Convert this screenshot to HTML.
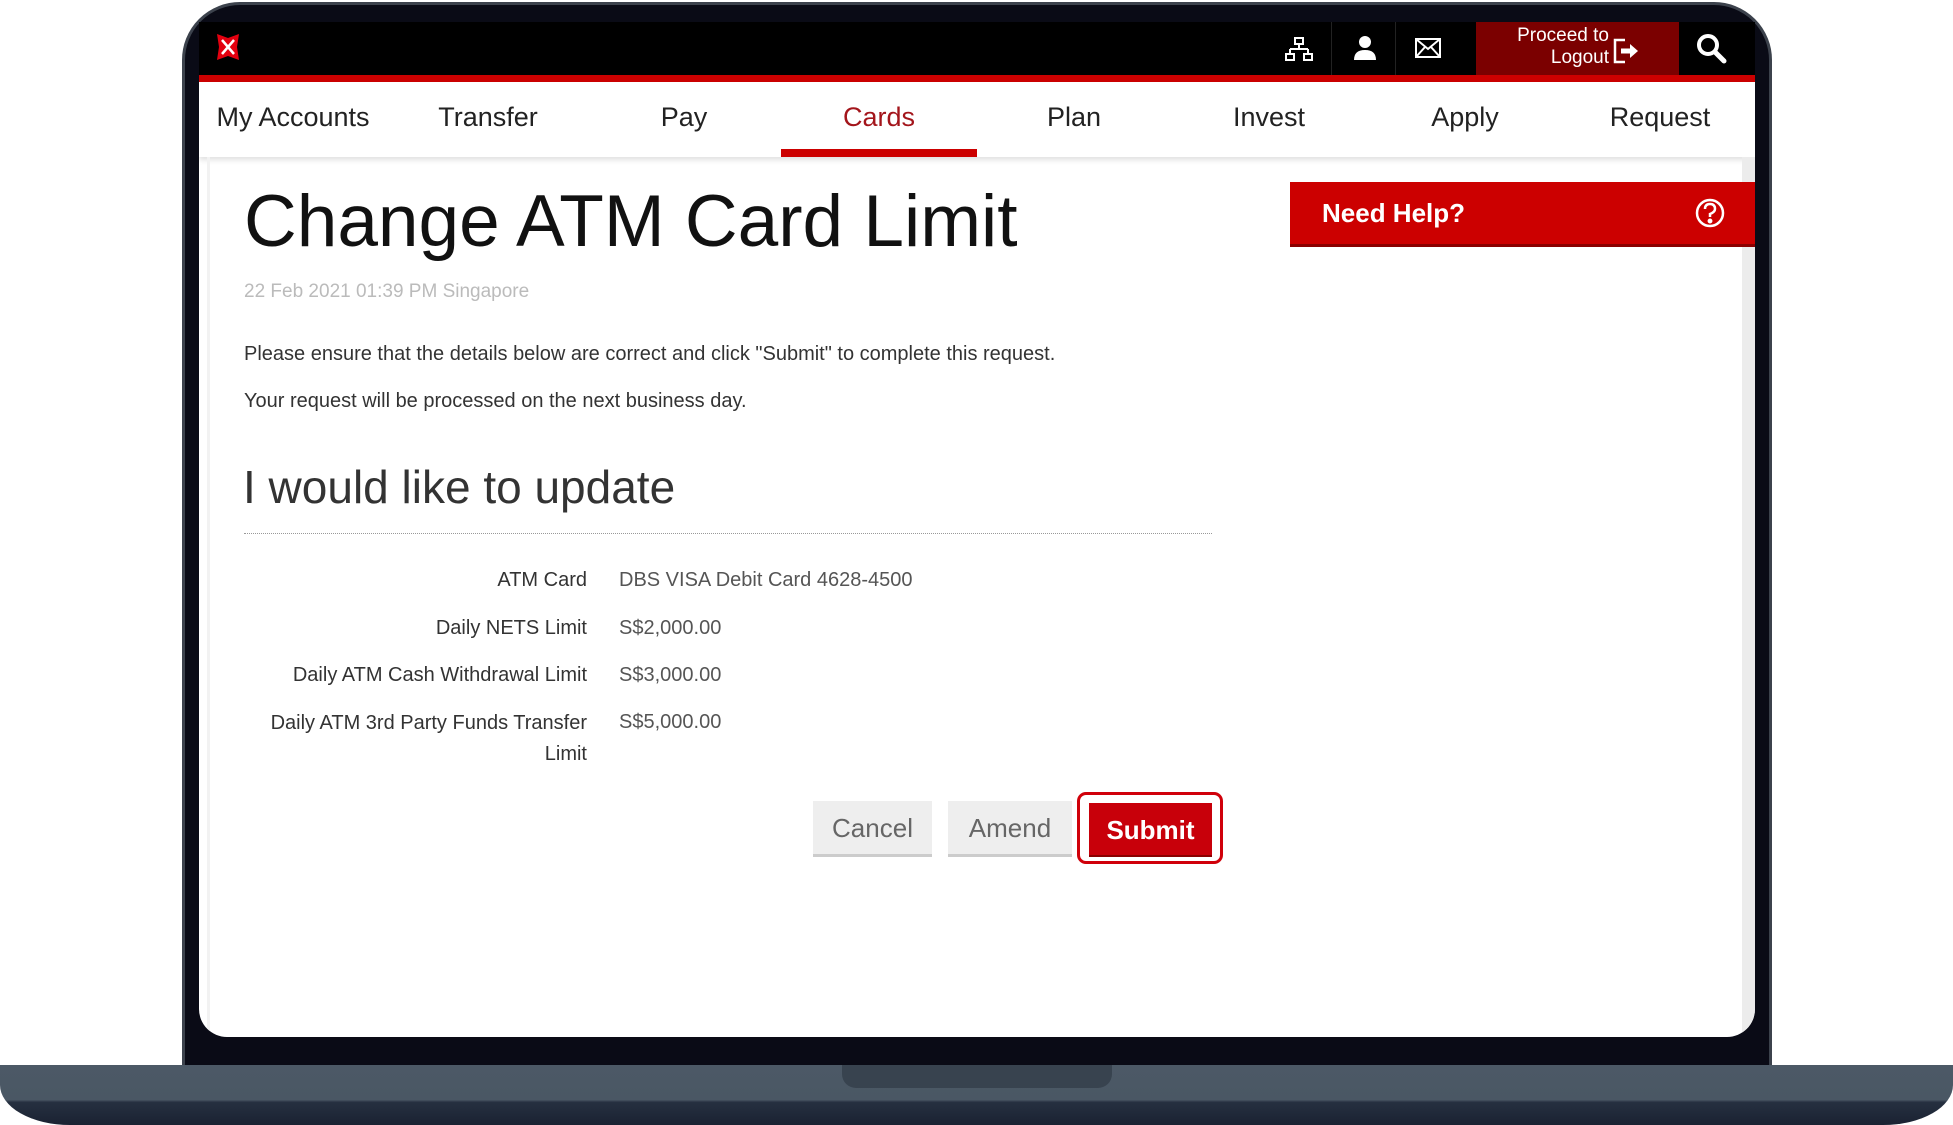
<!DOCTYPE html>
<html><head><meta charset="utf-8"><style>
*{margin:0;padding:0;box-sizing:border-box}
body{width:1953px;height:1125px;background:#fff;position:relative;overflow:hidden;font-family:"Liberation Sans",sans-serif}
.abs{position:absolute}
#body{left:182px;top:2px;width:1590px;height:1080px;background:#0a0b16;border-radius:58px 58px 0 0;border:3px solid #3c424c}
#screen{left:199px;top:22px;width:1556px;height:1015px;background:#fff;border-radius:0 0 28px 28px;overflow:hidden}
#top{left:0;top:0;width:1556px;height:53px;background:#000}
#red{left:0;top:53px;width:1556px;height:7px;background:#cc0000}
#nav{left:0;top:60px;width:1556px;height:75px;background:#fff;box-shadow:0 3px 5px rgba(0,0,0,.12)}
.ni{position:absolute;top:20px;font-size:27px;color:#222;width:196px;text-align:center}
#base{left:0;top:1065px;width:1953px;height:60px;background:linear-gradient(#4c5966 0,#4a5764 58%,#263040 62%,#1a2232 100%);border-radius:0 0 70px 70px / 0 0 40px 40px}
#notch{left:842px;top:1065px;width:270px;height:23px;background:#38434f;border-radius:0 0 14px 14px}
.lbl{position:absolute;right:0;text-align:right;font-size:20px;color:#333}
.val{position:absolute;font-size:20px;color:#555}
.btn{position:absolute;height:56px;font-size:26px;text-align:center;line-height:54px;background:#eee;color:#666;border-bottom:3px solid #ccc}
</style></head><body>
<div id="body" class="abs"></div>
<div id="base" class="abs"></div>
<div id="notch" class="abs"></div>
<div id="screen" class="abs">
 <div id="top" class="abs">
  <svg class="abs" style="left:14px;top:10px" width="30" height="30" viewBox="0 0 30 30"><path d="M4 2 L15 6 L26 2 L24 15 L26 28 L15 24 L4 28 L6 15Z" fill="#e3000f"/><path d="M9 8 L21 22 M21 8 L9 22" stroke="#fff" stroke-width="2.5"/></svg>
  <div class="abs" style="left:1132px;top:0;width:1px;height:53px;background:#222"></div>
  <div class="abs" style="left:1196px;top:0;width:1px;height:53px;background:#222"></div>
  <svg class="abs" style="left:1086px;top:14px" width="28" height="28" viewBox="0 0 28 28" fill="none" stroke="#fff" stroke-width="2"><rect x="10" y="2" width="8" height="6"/><path d="M14 8v5M5 13h18M5 13v5M23 13v5"/><rect x="1" y="18" width="8" height="6"/><rect x="19" y="18" width="8" height="6"/></svg>
  <svg class="abs" style="left:1152px;top:12px" width="28" height="30" viewBox="0 0 28 30" fill="#fff"><circle cx="14" cy="8" r="6"/><path d="M3 26 Q3 16 14 16 Q25 16 25 26Z"/></svg>
  <svg class="abs" style="left:1216px;top:15px" width="26" height="22" viewBox="0 0 26 22" fill="none" stroke="#fff" stroke-width="2"><rect x="1" y="2" width="24" height="18"/><path d="M1 2 L13 12 L25 2 M1 20 L10 10 M25 20 L16 10"/></svg>
  <div class="abs" style="left:1277px;top:0;width:203px;height:53px;background:#7b0000"></div>
  <div class="abs" style="left:1290px;top:3px;width:120px;color:#fff;font-size:19px;line-height:22px;text-align:right">Proceed to<br>Logout</div>
  <svg class="abs" style="left:1414px;top:16px" width="28" height="26" viewBox="0 0 28 26" fill="none" stroke="#fff" stroke-width="2.5"><path d="M12 2H2v22h10"/><path d="M8 13h10" stroke-width="5"/><path d="M17 6l8 7-8 7z" fill="#fff" stroke="none"/></svg>
  <svg class="abs" style="left:1496px;top:10px" width="34" height="34" viewBox="0 0 34 34" fill="none" stroke="#fff"><circle cx="13" cy="13" r="9" stroke-width="4"/><path d="M20 20l9 9" stroke-width="5" stroke-linecap="round"/></svg>
 </div>
 <div id="red" class="abs"></div>
 <div id="nav" class="abs">
  <div class="ni" style="left:-4px">My Accounts</div>
  <div class="ni" style="left:191px">Transfer</div>
  <div class="ni" style="left:387px">Pay</div>
  <div class="ni" style="left:582px;color:#a3151b">Cards</div>
  <div class="ni" style="left:777px">Plan</div>
  <div class="ni" style="left:972px">Invest</div>
  <div class="ni" style="left:1168px">Apply</div>
  <div class="ni" style="left:1363px">Request</div>
  <div class="abs" style="left:582px;top:67px;width:196px;height:8px;background:#cc0000"></div>
 </div>
 <div class="abs" style="left:1543px;top:135px;width:13px;height:880px;background:#ececec"></div>
 <div class="abs" style="left:8px;top:135px;width:3px;height:880px;background:#f2f2f2"></div>
 <div class="abs" style="left:45px;top:158px;font-size:73px;color:#111;white-space:nowrap">Change ATM Card Limit</div>
 <div class="abs" style="left:45px;top:259px;font-size:19px;color:#bbb">22 Feb 2021 01:39 PM Singapore</div>
 <div class="abs" style="left:45px;top:321px;font-size:20px;color:#333;white-space:nowrap">Please ensure that the details below are correct and click "Submit" to complete this request.</div>
 <div class="abs" style="left:45px;top:368px;font-size:20px;color:#333">Your request will be processed on the next business day.</div>
 <div class="abs" style="left:44px;top:438px;font-size:46px;color:#333;font-weight:300">I would like to update</div>
 <div class="abs" style="left:45px;top:511px;width:968px;border-top:1px dotted #999"></div>
 <div class="abs" style="left:0;top:0;width:388px;height:1000px">
  <div class="lbl" style="top:547px">ATM Card</div>
  <div class="lbl" style="top:595px">Daily NETS Limit</div>
  <div class="lbl" style="top:642px">Daily ATM Cash Withdrawal Limit</div>
  <div class="lbl" style="top:686px;line-height:31px">Daily ATM 3rd Party Funds Transfer<br>Limit</div>
 </div>
 <div class="val" style="left:420px;top:547px">DBS VISA Debit Card 4628-4500</div>
 <div class="val" style="left:420px;top:595px">S$2,000.00</div>
 <div class="val" style="left:420px;top:642px">S$3,000.00</div>
 <div class="val" style="left:420px;top:689px">S$5,000.00</div>
 <div class="btn" style="left:614px;top:779px;width:119px">Cancel</div>
 <div class="btn" style="left:749px;top:779px;width:124px">Amend</div>
 <div class="abs" style="left:878px;top:770px;width:146px;height:72px;border:3px solid #d0000a;border-radius:9px"></div>
 <div class="abs" style="left:890px;top:781px;width:123px;height:54px;background:#c8000a;color:#fff;font-size:26px;font-weight:bold;text-align:center;line-height:54px;border-bottom:2px solid #8a0000">Submit</div>
 <div class="abs" style="left:1091px;top:160px;width:465px;height:65px;background:#cc0000;border-bottom:3px solid #8a0000"></div>
 <div class="abs" style="left:1123px;top:176px;font-size:26px;font-weight:bold;color:#fff">Need Help?</div>
 <svg class="abs" style="left:1495px;top:175px" width="32" height="32" viewBox="0 0 32 32" fill="none" stroke="#fff" stroke-width="2.5"><circle cx="16" cy="16" r="13"/><path d="M11 12 Q11 7 16 7 Q21 7 21 12 Q21 15 16 17 V20"/><circle cx="16" cy="24" r="1.2" fill="#fff"/></svg>
</div>
</body></html>
